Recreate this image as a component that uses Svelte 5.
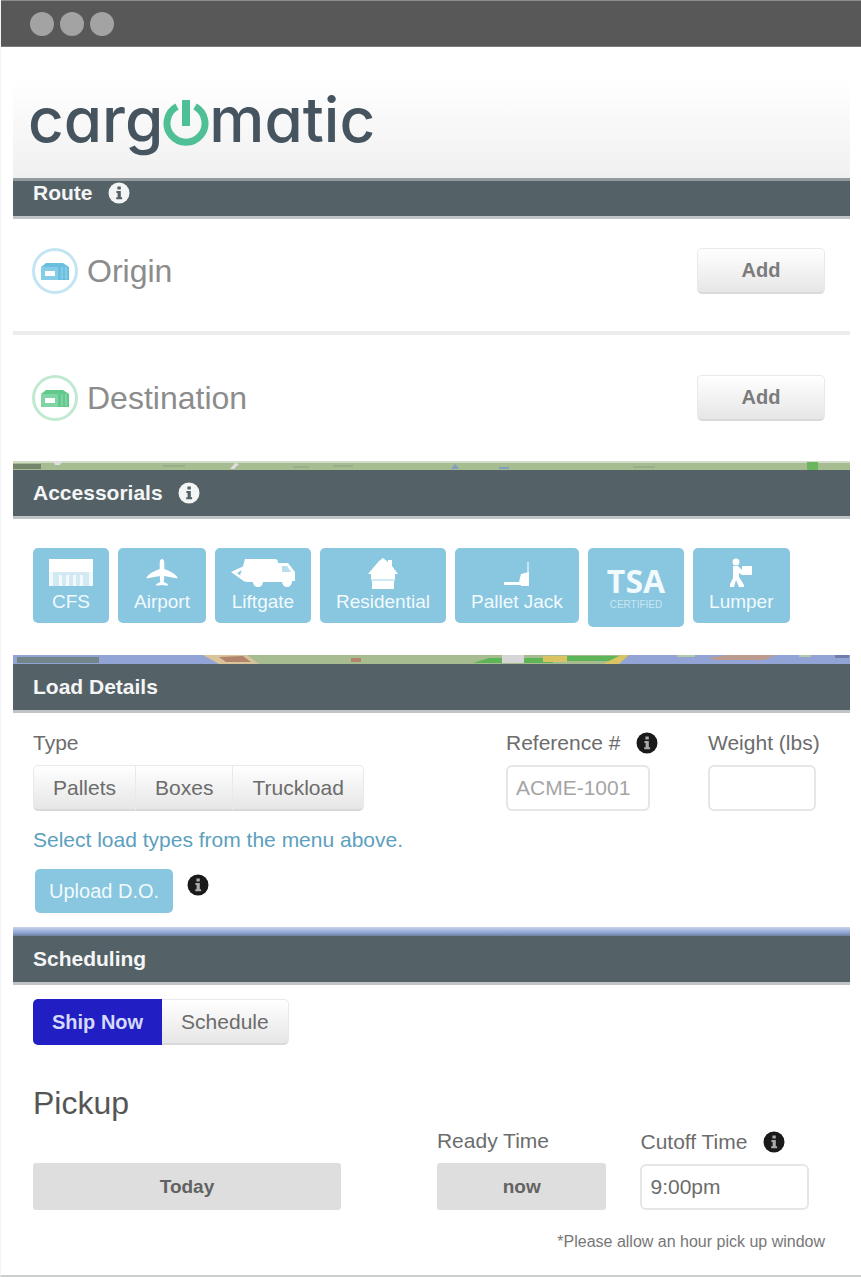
<script>
  let shipMode = $state('now');
  let loadType = $state('');
  let reference = $state('');
  let weight = $state('');
  let cutoff = $state('9:00pm');

  const stops = [
    { name: 'Origin', tone: 'blue' },
    { name: 'Destination', tone: 'green' }
  ];
  const loadTypes = ['Pallets', 'Boxes', 'Truckload'];
  const accessorials = ['CFS', 'Airport', 'Liftgate', 'Residential', 'Pallet Jack', 'TSA', 'Lumper'];
</script>

{#snippet info(tone)}
  <svg class="info {tone}" viewBox="0 0 22 22" aria-hidden="true">
    <circle cx="11" cy="11" r="10.5" class="disc" />
    <path class="mark" d="M9.4 4.5h3.4v3H9.4zM8.4 9h4.4v6.3h1.3v2H8.2v-2h1.4V11H8.4z" />
  </svg>
{/snippet}

{#snippet icon(kind)}
  {#if kind === 'CFS'}
    <svg width="44" height="30" viewBox="1 0 44 30" fill="#fff" aria-hidden="true">
      <rect x="1" y="1" width="44" height="13" />
      <rect x="1" y="14" width="44" height="14" opacity=".62" />
      <path d="M1 14h4v14H1zM11 17h3v11h-3zM18 17h3v11h-3zM25 17h3v11h-3zM32 17h3v11h-3zM41 14h4v14h-4z" opacity=".7" />
    </svg>
  {:else if kind === 'Airport'}
    <svg width="32" height="30" viewBox="0 0 32 30" fill="#fff" aria-hidden="true">
      <path d="M16 1c1.500 0 2.300 2 2.300 4v6c5 2 10 4 13 8v1.500l-13-2.500-.6 6 4 2v1.700L16 27l-5.700.7V26l4-2-.6-6-13 2.500V19c3-4 8-6 13-8V5c0-2 .8-4 2.300-4z" />
    </svg>
  {:else if kind === 'Liftgate'}
    <svg width="64" height="30" viewBox="1 0 64 30" fill="#fff" aria-hidden="true">
      <path d="M15 1h30c2 0 3 1 3 4h10l7 9v9h-3a5 5 0 0 1-10 1H33a5 5 0 0 1-10 0h-7l-6-7 2-5z" />
      <path d="M1 14l13-6v3l-7 4 8 6v3z" />
      <path d="M52 8h5l4 6h-9z" fill="#89c6e0" opacity=".6" />
      <circle cx="28" cy="25" r="4" /><circle cx="57" cy="25" r="4" />
    </svg>
  {:else if kind === 'Residential'}
    <svg width="32" height="32" viewBox="0 0 32 32" fill="#fff" aria-hidden="true">
      <path d="M16 0l5 4V2h4v6l6 8h-3v5H4v-5H1L12 3z" />
      <path d="M5 23h22v8H5z" /><path d="M4 21h24v2H4z" opacity=".6" />
    </svg>
  {:else if kind === 'Pallet Jack'}
    <svg width="30" height="30" viewBox="0 0 30 30" fill="#fff" aria-hidden="true">
      <path d="M25 4h2v12h-2z" opacity=".55" />
      <path d="M19 16l8-2v14h-8v-1H2v-3h15z" />
    </svg>
  {:else if kind === 'Lumper'}
    <svg width="26" height="30" viewBox="0 0 26 30" fill="#fff" aria-hidden="true">
      <circle cx="8" cy="4" r="3.500" />
      <path d="M5 8h5l4 4V8h10v9H14l-3-2v4l5 8v2h-5l-3-7-2 7H2v-3l3-6z" />
    </svg>
  {/if}
{/snippet}

<div class="window">
  <div class="chrome"><span></span><span></span><span></span></div>

  <main>
    <header>
      <h1 class="logo" aria-label="cargomatic">
        <span>carg</span>
        <svg width="46" height="52" viewBox="0 -6 46 52" fill="none" stroke="#4fc096" aria-hidden="true">
          <path d="M14 6.500A19 19 0 1 0 32 6.500" stroke-width="7" />
          <path d="M23 0v26" stroke-width="8" />
        </svg>
        <span>matic</span>
      </h1>
    </header>

    <section>
      <h2 class="bar first">Route {@render info('light')}</h2>
      {#each stops as stop}
        <div class="stop">
          <svg class={stop.tone} width="48" height="48" viewBox="0 0 48 48" aria-hidden="true">
            <circle cx="24" cy="24" r="21.500" fill="none" stroke="currentColor" stroke-width="3" opacity=".4" />
            <path d="M10 20l5-4h17l6 4v13H27V20z" fill="currentColor" />
            <path d="M10 20h17v13H10zM14 24v5h10v-5z" fill="currentColor" fill-rule="evenodd" opacity=".8" />
            <path d="M31 20v12M35 20v12" stroke="#fff" opacity=".4" />
          </svg>
          <h3>{stop.name}</h3>
          <button class="btn add">Add</button>
        </div>
      {/each}
    </section>

    <svg class="map" viewBox="0 0 837 9" preserveAspectRatio="none" aria-hidden="true">
      <rect width="837" height="9" fill="#a6bd92" />
      <rect width="837" height="2" fill="#d2dcca" />
      <path d="M0 3h28v5H0z" fill="#76866d" />
      <path d="M40 0h9l-2 4h-5zM217 8l5-6 4 1-5 5z" fill="#dfdde2" />
      <path d="M150 4h22v2h-22zM280 5h16v2h-16zM320 4h20v2h-20zM620 5h22v2h-22z" fill="#98ae89" />
      <path d="M438 8l4-5 4 5zM486 6h10v2h-10z" fill="#809dc4" />
      <rect x="794" y="1" width="11" height="8" fill="#69b65f" />
    </svg>

    <section>
      <h2 class="bar">Accessorials {@render info('light')}</h2>
      <div class="tiles">
        {#each accessorials as item}
          <button class="tile" class:tsa={item === 'TSA'}>
            {#if item === 'TSA'}
              <strong>TSA</strong><small>CERTIFIED</small>
            {:else}
              {@render icon(item)}
              <span>{item}</span>
            {/if}
          </button>
        {/each}
      </div>
    </section>

    <svg class="map" viewBox="0 0 837 9" preserveAspectRatio="none" aria-hidden="true">
      <rect width="837" height="9" fill="#a7bd91" />
      <path d="M0 0h190l16 9H0zM612 0h225v9H604z" fill="#91a4d5" />
      <path d="M4 2h82v6H4z" fill="#72868a" />
      <path d="M190 0h44l12 9h-40z" fill="#d9c39b" />
      <path d="M206 2l24-1 8 6h-25zM338 3h10v4h-10z" fill="#b2846c" />
      <path d="M460 8l16-5h64v5zM548 1h60l-12 5h-52z" fill="#5db557" />
      <path d="M530 1h24v6h-24zM600 4l8-4h8l-10 9h-16z" fill="#dac363" />
      <path d="M489 0h22v8h-22z" fill="#d7d6d6" />
      <path d="M695 3l20-3h48l-12 5h-48z" fill="#bd9b8c" />
      <path d="M664 0h18v2h-18zM786 0h12v2h-12z" fill="#b4c9ac" />
      <path d="M822 0h14v3h-14z" fill="#727caa" />
    </svg>

    <section>
      <h2 class="bar">Load Details</h2>
      <div class="load">
        <div class="fields">
          <div class="field grow">
            <span class="label" id="type-label">Type</span>
            <div class="group" role="group" aria-labelledby="type-label">
              {#each loadTypes as type}
                <button class="btn" aria-pressed={loadType === type} onclick={() => (loadType = type)}>{type}</button>
              {/each}
            </div>
          </div>
          <div class="field ref">
            <label for="reference">Reference # {@render info('dark')}</label>
            <input id="reference" placeholder="ACME-1001" bind:value={reference} />
          </div>
          <div class="field weight">
            <label for="weight">Weight (lbs)</label>
            <input id="weight" bind:value={weight} />
          </div>
        </div>
        <p class="hint">Select load types from the menu above.</p>
        <div class="upload">
          <button>Upload D.O.</button>
          {@render info('dark')}
        </div>
      </div>
    </section>

    <div class="water"></div>

    <section>
      <h2 class="bar">Scheduling</h2>
      <div class="schedule">
        <div class="group">
          <button class="btn" class:active={shipMode === 'now'} onclick={() => (shipMode = 'now')}>Ship Now</button>
          <button class="btn" class:active={shipMode === 'later'} onclick={() => (shipMode = 'later')}>Schedule</button>
        </div>
        <h3>Pickup</h3>
        <div class="times">
          <button class="flat day">Today</button>
          <div class="field">
            <span class="label" id="ready-label">Ready Time</span>
            <button class="flat" aria-describedby="ready-label">now</button>
          </div>
          <div class="field">
            <label for="cutoff">Cutoff Time {@render info('dark')}</label>
            <input id="cutoff" bind:value={cutoff} />
          </div>
        </div>
        <p class="note">*Please allow an hour pick up window</p>
      </div>
    </section>
  </main>
</div>

<style>
  :global(body) {
    background: #fff;
  }
  .window,
  button,
  input {
    font-family: 'Liberation Sans', Arial, sans-serif;
  }
  .window {
    box-sizing: border-box;
    min-height: 100vh;
    border-left: 1px solid #f4f4f4;
    border-bottom: 2px solid #cacecd;
    color: #6c6c6c;
    font-size: 21px;
    line-height: 24px;
  }
  h1, h2, h3, p {
    margin: 0;
    font-weight: 400;
  }
  svg {
    flex: none;
  }
  .chrome {
    box-sizing: border-box;
    height: 47px;
    display: flex;
    align-items: center;
    gap: 6px;
    padding-left: 29px;
    background: #585858;
    border-top: 1px solid #8b8e8c;
    border-bottom: 1px solid #7c7c7c;
  }
  .chrome span {
    width: 24px;
    height: 24px;
    border-radius: 50%;
    background: #a3a3a3;
  }
  main {
    margin: 0 11px 0 12px;
  }
  header {
    box-sizing: border-box;
    height: 131px;
    padding: 29px 15px 0;
    background: linear-gradient(#fff 25%, #f0f0f0);
  }
  .logo {
    display: flex;
    align-items: center;
    font-family: Inter, 'Liberation Sans', sans-serif;
    font-feature-settings: 'cv11';
    font-size: 62px;
    font-weight: 500;
    line-height: 88px;
    color: #45545f;
  }
  .bar {
    box-sizing: border-box;
    height: 49px;
    display: flex;
    align-items: center;
    gap: 15px;
    padding: 0 20px;
    background: #546167;
    border-bottom: 3px solid #c0c4c6;
    color: #f4f6f6;
    font-size: 21px;
    font-weight: 700;
  }
  .first {
    height: 41px;
    padding-bottom: 12px;
    border-top: 3px solid #939a9d;
  }
  .info {
    width: 22px;
    height: 22px;
  }
  .light .disc { fill: #f4f6f6; }
  .light .mark { fill: #546167; }
  .dark .disc { fill: #1a1a1a; }
  .dark .mark { fill: #aaa; }
  .stop {
    box-sizing: border-box;
    height: 126px;
    display: flex;
    align-items: center;
    gap: 8px;
    padding: 0 25px 0 18px;
  }
  .first + .stop {
    height: 116px;
    padding-bottom: 8px;
    border-bottom: 4px solid #ececec;
  }
  .blue { color: #69bfe0; }
  .green { color: #62c98d; }
  h3 {
    font-size: 32px;
    line-height: 36px;
  }
  .stop h3 {
    flex: 1;
    color: #8c8c8c;
  }
  button {
    border: 0;
    margin: 0;
    cursor: pointer;
  }
  .btn {
    box-sizing: border-box;
    height: 46px;
    padding: 0 19px;
    border: 1px solid #e9e9e9;
    border-bottom: 2px solid #d9d9d9;
    border-radius: 5px;
    background: linear-gradient(#fff, #e6e6e6);
    color: #6c6c6c;
    font-size: 21px;
  }
  .add {
    width: 128px;
    font-size: 20px;
    font-weight: 700;
    color: #7b7b7b;
  }
  .map {
    display: block;
    width: 100%;
    height: 9px;
  }
  .water {
    height: 9px;
    background: linear-gradient(#c9d5ea, #8fa6d8 60%, #6e809c);
  }
  .tiles {
    display: flex;
    flex-wrap: wrap;
    align-items: flex-start;
    gap: 9px;
    padding: 29px 20px 28px;
  }
  .tile {
    box-sizing: border-box;
    height: 75px;
    display: flex;
    flex-direction: column;
    align-items: center;
    justify-content: space-between;
    padding: 10px 16px;
    border-radius: 5px;
    background: #89c6e0;
    color: #f1fafd;
    font-size: 19px;
    line-height: 22px;
  }
  .tsa {
    height: 79px;
    justify-content: center;
    padding: 0 19px 6px;
  }
  .tsa strong {
    font-family: 'Open Sans', sans-serif;
    font-size: 32px;
    line-height: 44px;
  }
  .tsa small {
    margin-top: -4px;
    font-size: 10px;
    line-height: 12px;
    color: #c9e6f2;
  }
  .load {
    padding: 18px 25px 14px 20px;
  }
  .fields {
    display: flex;
  }
  .field {
    display: flex;
    flex-direction: column;
    gap: 10px;
  }
  .grow { flex: 1; }
  .ref { width: 202px; }
  .weight { width: 117px; }
  .ref input { width: 144px; }
  .weight input { width: 108px; }
  label {
    display: flex;
    align-items: center;
    gap: 16px;
    white-space: nowrap;
  }
  input {
    box-sizing: border-box;
    width: 100%;
    height: 46px;
    padding: 0 8px;
    border: 2px solid #e6e6e6;
    border-radius: 6px;
    background: #fff;
    color: #6c6c6c;
    font-size: 21px;
  }
  input::placeholder {
    color: #a5a5a5;
    opacity: 1;
  }
  .group {
    display: flex;
  }
  .group .btn:not(:first-child) {
    border-left: 0;
    border-top-left-radius: 0;
    border-bottom-left-radius: 0;
  }
  .group .btn:not(:last-child) {
    border-top-right-radius: 0;
    border-bottom-right-radius: 0;
  }
  .group .btn.active {
    border: 0;
    background: #211ec4;
    color: #d5d9fb;
    font-weight: 700;
    font-size: 20px;
  }
  .hint {
    margin-top: 17px;
    color: #5c9fbe;
  }
  .upload {
    display: flex;
    align-items: flex-start;
    gap: 14px;
    margin-top: 17px;
  }
  .upload button {
    height: 44px;
    margin-left: 2px;
    padding: 0 14px;
    border-radius: 5px;
    background: #89c6e0;
    color: #f1fafd;
    font-size: 20px;
  }
  .upload :global(svg) {
    margin-top: 5px;
  }
  .schedule {
    padding: 14px 25px 20px 20px;
  }
  .schedule h3 {
    margin-top: 40px;
    color: #555;
  }
  .times {
    display: grid;
    grid-template-columns: 371fr 170fr 169fr;
    column-gap: 34px;
    align-items: end;
    margin-top: 8px;
    padding-right: 16px;
  }
  .day {
    margin-right: 62px;
  }
  .flat {
    height: 47px;
    border-radius: 3px;
    background: #dedede;
    color: #626262;
    font-size: 19px;
    font-weight: 700;
  }
  .note {
    margin-top: 20px;
    text-align: right;
    font-size: 16px;
    color: #777;
  }
</style>
